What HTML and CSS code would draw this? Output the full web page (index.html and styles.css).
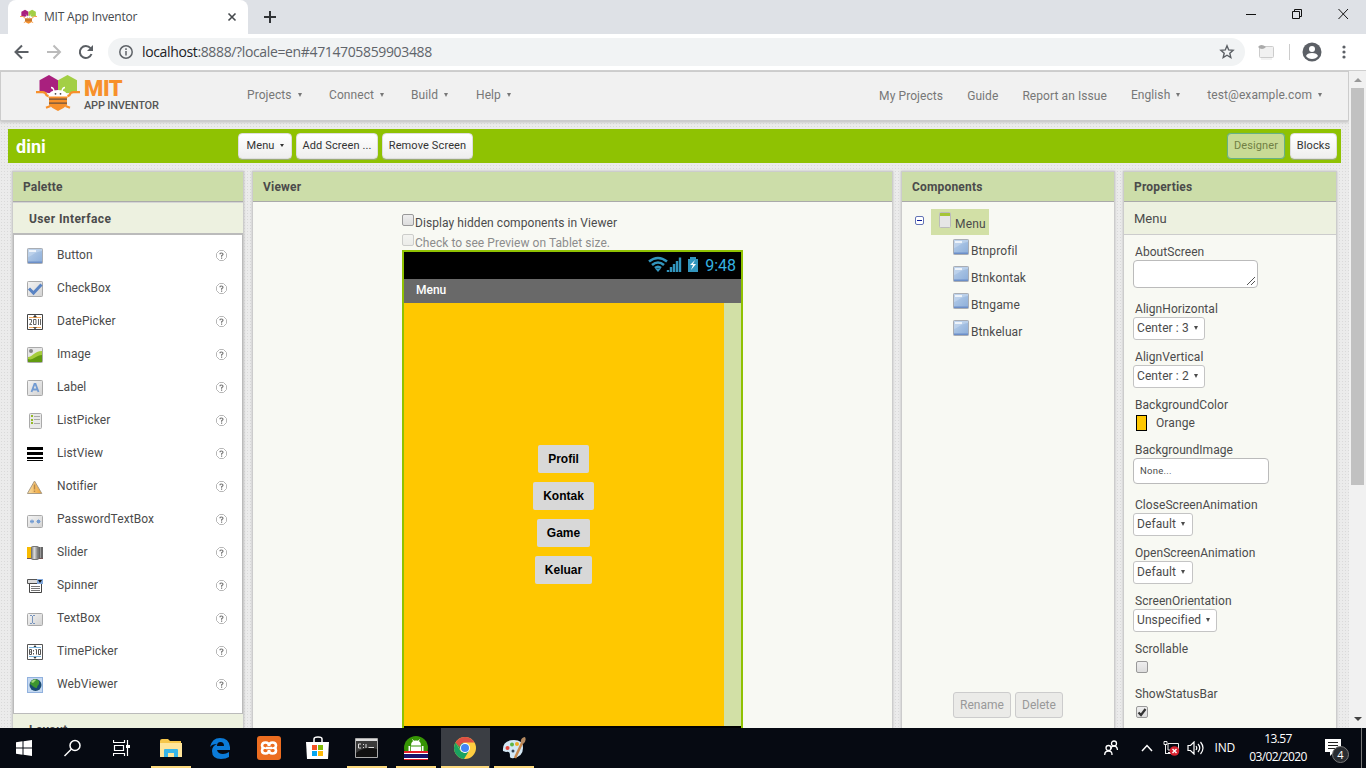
FILE: index.html
```html
<!DOCTYPE html>
<html lang="en">
<head>
<meta charset="utf-8">
<title>MIT App Inventor</title>
<link rel="stylesheet" href="styles.css">
</head>
<body>
<svg class="defs" width="0" height="0">
  <defs>
    <linearGradient id="blue" x1="0" y1="0" x2="1" y2="1"><stop offset="0" stop-color="#b9d0ea"/><stop offset="1" stop-color="#8badd9"/></linearGradient>
    <linearGradient id="grey" x1="0" y1="0" x2="1" y2="1"><stop offset="0" stop-color="#f4f4f4"/><stop offset="1" stop-color="#d2d2d2"/></linearGradient>
    <linearGradient id="amber" x1="0" y1="0" x2="1" y2="0"><stop offset="0" stop-color="#fbe0a4"/><stop offset="1" stop-color="#eda034"/></linearGradient>
    <linearGradient id="steel" x1="0" y1="0" x2="1" y2="0"><stop offset="0" stop-color="#777"/><stop offset=".4" stop-color="#ddd"/><stop offset="1" stop-color="#666"/></linearGradient>
    <symbol id="button" viewBox="0 0 16 16"><rect x=".5" y=".5" width="15" height="15" rx=".8" fill="url(#blue)" stroke="#a9adb3"/><path d="M1 14V9C5 8 7 4 15 3V1H1Z" fill="#c6d9ef" opacity=".6"/><path d="M2 2h7v2H2z" fill="#edf3fa"/><path d="M1 13.5h14V15H1z" fill="#6c8fc8"/></symbol>
    <symbol id="checkbox" viewBox="0 0 16 16"><rect x=".5" y=".5" width="15" height="15" rx=".8" fill="url(#grey)" stroke="#aaa"/><path d="M2 7.500l4.500 4.500L14.500 3.500" fill="none" stroke="#5a84c4" stroke-width="3"/></symbol>
    <symbol id="date" viewBox="0 0 16 16"><path d="M.5.5h15v15H.5z" fill="#fff" stroke="#444"/><path d="M2 3.500h12M2 13.500h12" stroke="#f3a95c"/><path d="M6.500 3L8 1l1.500 2zM6.500 13.500L8 15l1.500-1.500z" fill="#333" stroke="#333" stroke-width=".5"/><path d="M2 5.500h2.500V8L2.500 10.500H5M6.500 5.500H9v5H6.500zM11.500 5v6M13.500 5v6" fill="none" stroke="#666"/></symbol>
    <symbol id="image" viewBox="0 0 16 16"><rect x=".5" y=".5" width="15" height="15" rx=".8" fill="#e6e6e6" stroke="#aaa"/><path d="M1 10c5 0 6-6 14-6v11H1z" fill="#a5cc3c"/><path d="M1 15v-3c5 2 8-4 14-4v7z" fill="#629b10"/><circle cx="4" cy="4" r="2" fill="#888"/></symbol>
    <symbol id="label" viewBox="0 0 16 16"><rect x=".5" y=".5" width="15" height="15" rx=".8" fill="url(#grey)" stroke="#aaa"/><path d="M4.500 12L7.500 4h1l3 8M5.500 9.500h5" fill="none" stroke="#729bd2" stroke-width="1.800"/></symbol>
    <symbol id="listpicker" viewBox="0 0 16 16"><rect x="2.500" y=".5" width="12" height="15" rx="1" fill="#e8e8e8" stroke="#aaa"/><path d="M4 2h2v2H4zM4 6h2v2H4zM4 9h2v2H4z" fill="#94b928"/><path d="M7 3.500h6M7 6.500h6M7 10.500h6" stroke="#aaa"/></symbol>
    <symbol id="listview" viewBox="0 0 16 16"><path d="M0 1h16v3H0zM0 6h16v3H0zM0 11h16v2H0zM0 14h16v1H0z"/></symbol>
    <symbol id="notifier" viewBox="0 0 16 16"><path d="M7.500 2L14.800 14.500H.4Z" fill="url(#amber)" stroke="#a99c87"/><path d="M7.500 5.500v5M7.500 11.500v1.500" stroke="#b6884b" stroke-width="1.500"/></symbol>
    <symbol id="password" viewBox="0 0 16 16"><rect x=".5" y="3.500" width="15" height="12" rx="1" fill="url(#grey)" stroke="#aaa"/><path d="M5 7.500v4M3 9.500h4M3.500 8l3 3M6.500 8l-3 3M11.500 7.500v4M9.500 9.500h4M10 8l3 3M13 8l-3 3" stroke="#759dd2"/></symbol>
    <symbol id="slider" viewBox="0 0 16 16"><path d="M0 2h7v11H0z" fill="#f8bb00"/><path d="M11 2h5v11h-5z" fill="#666"/><path d="M13 2h1v11h-1z" fill="#999"/><path d="M0 13h16v1H0z" fill="#755"/><rect x="4.500" y="1.500" width="7" height="13" rx="1" fill="url(#steel)" stroke="#777"/></symbol>
    <symbol id="spinner" viewBox="0 0 16 16"><path d="M.5 1.500h15v4H.5z" fill="#ddd" stroke="#555"/><path d="M2.500 5.500h12v9h-12z" fill="#fff" stroke="#444"/><path d="M10 1h6v5h-6z" fill="#83a9dc"/><path d="M11 2h4l-2 3z" fill="#111"/><path d="M4 8.500h9M4 10.500h9M4 12.500h9" stroke="#777"/></symbol>
    <symbol id="textbox" viewBox="0 0 16 16"><rect x=".5" y="2.500" width="15" height="12" rx="1" fill="url(#grey)" stroke="#aaa"/><path d="M3 4.500h2M6 4.500h2M5.500 5v7M3 12.500h2M6 12.500h2" stroke="#7895bd" fill="none"/></symbol>
    <symbol id="time" viewBox="0 0 16 16"><path d="M.5.5h15v15H.5z" fill="#fff" stroke="#555"/><path d="M2 3.500h12M2 12.500h12" stroke="#7ab3dc"/><path d="M6.500 3L8 1l1.500 2zM6.500 13L8 15l1.500-2z" fill="#333"/><path d="M2.500 5.500h2v5h-2zM2.500 8h2M6.500 6v1.500M6.500 9v1.500M8.500 5.500h1v5M11.500 5.500h2v5h-2z" fill="none" stroke="#555"/></symbol>
    <symbol id="web" viewBox="0 0 16 16"><rect x=".5" y=".5" width="15" height="15" fill="#c5d9f1" stroke="#91b1de"/><circle cx="8.500" cy="8" r="6" fill="#194a71"/><path d="M3 7c1-5 6-6 9-3 1 4-2 4-2 7-3 0-4-2-7-4z" fill="#3d952f"/><path d="M4 5c1-2 4-3 5-2L6 6z" fill="#a2da79"/></symbol>
    <symbol id="help" viewBox="0 0 12 12"><path d="M3.500.5h4l3 3v4l-3 3h-4l-3-3v-4z" fill="#fff" stroke="#b8b8b8"/><path d="M4 4.200Q4 3 5.500 3T7 4.200Q7 5 5.600 5.800V6.800M5.600 7.600v1.200" fill="none" stroke="#777" stroke-width="1.200"/></symbol>
    <symbol id="bee" viewBox="0 0 44 37">
      <path d="M3.500 5.200L13 0l9 5.200V18H12l-8.500-2z" fill="#a9207e"/>
      <path d="M22 5.200L31.500 0 41 5.200V16l-8 2H22z" fill="#a3cf45"/>
      <path d="M0 17.200h6.500q3 0 4 3l3 1.500M44 17.200h-6.500q-3 0-4 3l-3 1.500M14.500 31l-4.500 1.800M29.500 31l4.500 1.800" fill="none" stroke="#f7902b" stroke-width="2.200"/>
      <path d="M12.500 22q0-7 9.500-7t9.500 7z" fill="#fff"/>
      <path d="M15 12.500q2.500 0 3 3.500M29 12.500q-2.500 0-3 3.500" fill="none" stroke="#fff" stroke-width="1.300"/>
      <path d="M13 21.500h18V30q-3 3.500-9 6-6-2.500-9-6z" fill="#f7902b"/>
      <path d="M13 24.200h18M13 28.200h18" stroke="#6b513f" stroke-width="1.300"/>
      <circle cx="19.500" cy="18.800" r=".9" fill="#444"/><circle cx="24.500" cy="18.800" r=".9" fill="#444"/>
    </symbol>
  </defs>
</svg>

<div class="tabs">
  <div class="tab"><svg width="17" height="16"><use href="#bee"/></svg><span>MIT App Inventor</span><svg class="tab-close" width="10" height="10"><path d="M1.500 1.500l7 7m0-7l-7 7" stroke="#45494d" stroke-width="1.600"/></svg></div>
  <svg class="plus" width="14" height="14"><path d="M7 1v12M1 7h12" stroke="#303336" stroke-width="2"/></svg>
  <svg class="winbtns" width="104" height="12" fill="none" stroke="#111"><path d="M0 6.500h10M46.500 3.500h7v7h-7zM48.500 3v-1.500h7v7H54M92.500 1l9.500 10m0-10l-9.500 10"/></svg>
</div>
<div class="toolbar">
  <svg class="nav" width="82" height="18" fill="none" stroke="#5b5f64" stroke-width="2"><path d="M14.500 9H2M8 2.500L1.500 9 8 15.500"/><path d="M33 9h12.500M39.500 2.500L46 9l-6.500 6.500" stroke="#bbb"/><path d="M76.500 5.200A6 6 0 1 0 77.500 11"/><path d="M79 2v6h-6z" fill="#5b5f64" stroke="none"/></svg>
  <div class="omnibox">
    <svg width="14" height="14" fill="none" stroke="#5f6368" stroke-width="1.500"><circle cx="7" cy="7" r="6.200"/><path d="M7 6v4.500M7 3.300v1.600"/></svg>
    <span class="url"><b>localhost</b>:8888/?locale=en#4714705859903488</span>
    <svg class="star" width="16" height="16" viewBox="0 0 16 16"><path d="M8 1.800l1.700 4.100 4.400.4-3.300 2.900 1 4.300L8 11.200l-3.800 2.300 1-4.300L1.900 6.300l4.400-.4z" fill="none" stroke="#5b5f64" stroke-width="1.400"/></svg>
  </div>
  <svg class="ext" width="17" height="16"><rect x="1.500" y="2.500" width="14" height="11" rx="1" fill="#f1f1f1" stroke="#ccc"/><path d="M0 3q3-4 8 0-4 4-8 0" fill="#aaa"/><path d="M3 15h11" stroke="#e5e5e5"/></svg>
  <i class="sep"></i>
  <svg class="avatar" width="20" height="20"><circle cx="10" cy="10" r="9.500" fill="#5c6066"/><circle cx="10" cy="7" r="3" fill="#fff"/><path d="M4 14q1-3 6-3t6 3q-2 3-6 3t-6-3" fill="#fff"/></svg>
  <svg class="dots" width="4" height="14" fill="#5c6066"><circle cx="2" cy="2" r="1.600"/><circle cx="2" cy="7" r="1.600"/><circle cx="2" cy="12" r="1.600"/></svg>
</div>

<div class="viewport">
  <div class="page">
    <header class="top">
      <svg class="logo" width="44" height="37"><use href="#bee"/></svg>
      <div class="brand"><strong>MIT</strong><span>APP INVENTOR</span></div>
      <nav class="menu"><span class="m1">Projects<i class="ar"></i></span><span class="m2">Connect<i class="ar"></i></span><span class="m3">Build<i class="ar"></i></span><span>Help<i class="ar"></i></span></nav>
      <nav class="links"><span class="low l1">My Projects</span><span class="low l2">Guide</span><span class="low l3">Report an Issue</span><span class="l4">English<i class="ar"></i></span><span class="l5">test@example.com<i class="ar"></i></span></nav>
    </header>
    <div class="green">
      <h1>dini</h1>
      <span class="btn b1">Menu<i class="ar"></i></span><span class="btn b2">Add Screen ...</span><span class="btn b3">Remove Screen</span>
      <span class="btn b4">Designer</span><span class="btn b5">Blocks</span>
    </div>
    <main class="cols">
      <section class="panel palette">
        <h2>Palette</h2>
        <h3>User Interface</h3>
        <ul>
          <li><svg class="ic"><use href="#button"/></svg><span>Button</span><svg class="q"><use href="#help"/></svg></li>
          <li><svg class="ic"><use href="#checkbox"/></svg><span>CheckBox</span><svg class="q"><use href="#help"/></svg></li>
          <li><svg class="ic"><use href="#date"/></svg><span>DatePicker</span><svg class="q"><use href="#help"/></svg></li>
          <li><svg class="ic"><use href="#image"/></svg><span>Image</span><svg class="q"><use href="#help"/></svg></li>
          <li><svg class="ic"><use href="#label"/></svg><span>Label</span><svg class="q"><use href="#help"/></svg></li>
          <li><svg class="ic"><use href="#listpicker"/></svg><span>ListPicker</span><svg class="q"><use href="#help"/></svg></li>
          <li><svg class="ic"><use href="#listview"/></svg><span>ListView</span><svg class="q"><use href="#help"/></svg></li>
          <li><svg class="ic"><use href="#notifier"/></svg><span>Notifier</span><svg class="q"><use href="#help"/></svg></li>
          <li><svg class="ic"><use href="#password"/></svg><span>PasswordTextBox</span><svg class="q"><use href="#help"/></svg></li>
          <li><svg class="ic"><use href="#slider"/></svg><span>Slider</span><svg class="q"><use href="#help"/></svg></li>
          <li><svg class="ic"><use href="#spinner"/></svg><span>Spinner</span><svg class="q"><use href="#help"/></svg></li>
          <li><svg class="ic"><use href="#textbox"/></svg><span>TextBox</span><svg class="q"><use href="#help"/></svg></li>
          <li><svg class="ic"><use href="#time"/></svg><span>TimePicker</span><svg class="q"><use href="#help"/></svg></li>
          <li><svg class="ic"><use href="#web"/></svg><span>WebViewer</span><svg class="q"><use href="#help"/></svg></li>
        </ul>
        <h3 class="layout">Layout</h3>
      </section>
      <section class="panel viewer">
        <h2>Viewer</h2>
        <div class="checks"><p><i class="cb"></i>Display hidden components in Viewer</p><p class="off"><i class="cb"></i>Check to see Preview on Tablet size.</p></div>
        <div class="phone">
          <div class="status">
            <svg width="52" height="18" viewBox="0 0 52 18" fill="none" stroke="#3295bd" stroke-width="2.600"><path d="M1 5.500q9-7 18 0M4 9q6-5 12 0M7 12q3-2.500 6 0"/><path d="M10 16l-3-3.500h6z" fill="#3295bd" stroke="none"/><path d="M20 16v-2M23 16v-5M26 16V8M29 16V5M32 16V1.500" stroke-width="2.400"/><path d="M40 3h2V1h6v2h2v13H40z" fill="#3295bd" stroke="none"/><path d="M47 4l-5 5h3l-2 5 5-6h-3z" fill="#fff" stroke="none"/></svg>
            <span>9:48</span>
          </div>
          <div class="title">Menu</div>
          <div class="body"><div class="screen"><span class="pb p1">Profil</span><span class="pb p2">Kontak</span><span class="pb p3">Game</span><span class="pb p4">Keluar</span></div></div>
          <div class="bottom"></div>
        </div>
      </section>
      <section class="panel comps">
        <h2>Components</h2>
        <div class="root"><svg width="10" height="10"><rect x=".5" y=".5" width="8" height="8" rx="1.500" fill="#fff" stroke="#6474b5"/><path d="M2 4.500h5" stroke="#111f9a"/></svg><span class="sel"><svg width="14" height="17"><rect x="1.500" y=".5" width="11" height="15" rx="1" fill="#e6e6e6" stroke="#bbb"/><path d="M2 1h10v3H2z" fill="#a5c438"/></svg>Menu</span></div>
        <div class="child"><svg class="ic"><use href="#button"/></svg><span>Btnprofil</span></div>
        <div class="child"><svg class="ic"><use href="#button"/></svg><span>Btnkontak</span></div>
        <div class="child"><svg class="ic"><use href="#button"/></svg><span>Btngame</span></div>
        <div class="child"><svg class="ic"><use href="#button"/></svg><span>Btnkeluar</span></div>
        <div class="actions"><span class="rn">Rename</span><span class="dl">Delete</span></div>
      </section>
      <section class="panel props">
        <h2>Properties</h2>
        <h4>Menu</h4>
        <div class="pr r1"><label>AboutScreen</label><div class="ta"><svg width="10" height="10"><path d="M1 9l8-8M5 9l4-4" stroke="#555"/></svg></div></div>
        <div class="pr"><label>AlignHorizontal</label><span class="dd w72">Center : 3<i class="ar"></i></span></div>
        <div class="pr"><label>AlignVertical</label><span class="dd w72">Center : 2<i class="ar"></i></span></div>
        <div class="pr r4"><label>BackgroundColor</label><div class="color"><i></i>Orange</div></div>
        <div class="pr r5"><label>BackgroundImage</label><div class="none">None...</div></div>
        <div class="pr"><label>CloseScreenAnimation</label><span class="dd w60">Default<i class="ar"></i></span></div>
        <div class="pr"><label>OpenScreenAnimation</label><span class="dd w60">Default<i class="ar"></i></span></div>
        <div class="pr"><label>ScreenOrientation</label><span class="dd w84">Unspecified<i class="ar"></i></span></div>
        <div class="pr r9"><label>Scrollable</label><i class="cb"></i></div>
        <div class="pr r9"><label>ShowStatusBar</label><i class="cb"><svg width="10" height="10"><path d="M1.500 5.500L4 8l4.500-6" fill="none" stroke="#333" stroke-width="2.200"/></svg></i></div>
      </section>
    </main>
  </div>
  <div class="scroll"><i class="up"></i><div class="thumb"></div><i class="down"></i></div>
</div>

<footer class="task">
  <div class="t"><svg width="16" height="16" fill="#fff"><path d="M0 2.300l6.500-1v6.200H0zM7.500 1.200L16 0v7.500H7.500zM0 8.500h6.500v6.200L0 13.800zM7.500 8.500H16V16l-8.500-1.200z"/></svg></div>
  <div class="t"><svg width="18" height="18" fill="none" stroke="#fff" stroke-width="1.500"><circle cx="11" cy="6.500" r="5"/><path d="M7.500 10l-7 7"/></svg></div>
  <div class="t"><svg width="18" height="16" fill="none" stroke="#fff"><path d="M.5 0v2.500h11V0M.5 16v-2.500h11V16M1.500 5.500h9v5h-9zM14.500 0v16" stroke-width="1.200"/><path d="M13 5h4v3h-4z" fill="#fff" stroke="none"/></svg></div>
  <div class="t u"><svg width="22" height="18"><path d="M0 2q0-2 2-2h6l2 2h11v16H0z" fill="#f6c64a"/><path d="M0 4h22v14H0z" fill="#ffe59a"/><path d="M4 18v-7q0-1 1-1h12q1 0 1 1v7h-4v-4H8v4z" fill="#37b5e8"/></svg></div>
  <div class="t"><svg width="22" height="22" viewBox="0 0 22 22"><path d="M1 10Q3 1 11 1q9 0 10 9v3H8q1 4 6 4 3 0 6-2v5q-3 2-8 2Q3 22 3 14q0-5 5-7-5 0-7 3zM8 9h7q0-4-3.500-4T8 9z" fill="#0b7bd8" fill-rule="evenodd"/></svg></div>
  <div class="t"><svg width="24" height="24"><rect width="24" height="24" rx="3" fill="#ec6d20"/><path d="M12 10Q12 6.500 8.500 6.500T5 9.500q0 2 1.500 2.500-1.500.5-1.500 2.500 0 3 3.500 3T12 14q0 3.500 3.500 3.500t3.500-3q0-2-1.500-2.500 1.500-.5 1.500-2.500 0-3-3.500-3T12 10M9 12h6" fill="none" stroke="#fff" stroke-width="2.600"/></svg></div>
  <div class="t"><svg width="24" height="24"><path d="M8 7V3q0-2 4-2t4 2v4" fill="none" stroke="#fff" stroke-width="1.500"/><path d="M0 6h23l-1 17H1z" fill="#fff"/><path d="M6 9h5v5H6z" fill="#f35325"/><path d="M12 9h5v5h-5z" fill="#81bc06"/><path d="M6 15h5v5H6z" fill="#05a6f0"/><path d="M12 15h5v5h-5z" fill="#ffba08"/></svg></div>
  <div class="t u"><svg width="24" height="20"><path d="M.5.500h22v19H.5z" fill="#111" stroke="#aaa"/><path d="M1 1h21v2H1z" fill="#ddd"/><path d="M1 3h21v8q-12-3-21 4z" fill="#3b3b3b"/><path d="M6 6H3.500v4H6M8.500 6v1M8.500 9v1M11 6v4M13.500 9.500H19" stroke="#ddd" fill="none"/></svg></div>
  <div class="t u"><svg width="24" height="24"><circle cx="12" cy="12" r="12" fill="#369405"/><path d="M7 9.500q0-5 5-5t5 5zM7 10.500h10V15H7zM4.500 10h1.700v5H4.500zM17.800 10h1.700v5h-1.700z" fill="#fff"/><path d="M8.500 3.500l1.500 2M15.500 3.500l-1.500 2" stroke="#fff"/><path d="M0 15h24v9H0z" fill="#fff"/><path d="M0 15h24v2H0zM0 23h24v1H0z" fill="#e5202b"/><path d="M0 18h24v4H0z" fill="#17126b"/></svg></div>
  <div class="t u on"><svg width="22" height="22" viewBox="0 0 22 22"><circle cx="11" cy="11" r="11" fill="#ffcd40"/><path d="M1.500 5.500A11 11 0 0 0 10 22l5.500-9L11 16l-4.500-2z" fill="#1aa260"/><path d="M1.500 5.500L7 14l4-8z" fill="#1aa260"/><path d="M1.500 5.500A11 11 0 0 1 20.500 5.500H11A5.500 5.500 0 0 0 5.700 10z" fill="#dd5044"/><circle cx="11" cy="11" r="5" fill="#fff"/><circle cx="11" cy="11" r="4" fill="#4285f4"/></svg></div>
  <div class="t u"><svg width="24" height="24"><path d="M1 15Q0 4 12 4q9 0 9 8t-9 10q-5 1-4-3 0-4-4-3z" fill="#d4e8f5"/><circle cx="5.500" cy="12" r="2" fill="#e5473d"/><circle cx="10" cy="8.500" r="2" fill="#5db543"/><circle cx="15" cy="8" r="2" fill="#eeac25"/><circle cx="11" cy="15" r="1.500" fill="#345"/><path d="M20 7l-7 15" stroke="#c7884d" stroke-width="2.500"/><path d="M19 7q-1-5 4-6 2 4-2 7z" fill="#b58a61"/></svg></div>
  <div class="tray">
    <svg width="14" height="16" fill="none" stroke="#fff" stroke-width="1.300"><circle cx="10" cy="3.500" r="2.500"/><path d="M7 9q0-3 3-3t3.500 4"/><circle cx="4.500" cy="8" r="2.500"/><path d="M.7 15q0-4 3.800-4T8 15"/></svg>
    <svg class="chev" width="12" height="8" fill="none" stroke="#fff" stroke-width="1.500"><path d="M1 7l5-5.500L11 7"/></svg>
    <svg class="net" width="17" height="16"><path d="M1 1.500h3v3H1zM2.500 5v9M2.500 13.500h6M5 3.500h10.500v6M5 3.500v6.500h4M5 12.500h4" fill="none" stroke="#eee"/><circle cx="11.500" cy="11" r="4.800" fill="#d8222f"/><path d="M9.500 9l4 4m0-4l-4 4" stroke="#fff" stroke-width="1.400"/></svg>
    <svg class="vol" width="18" height="14" fill="none" stroke="#fff"><path d="M1 4.500h2.500L7 1v12L3.500 9.500H1zM9 5q1.500 2 0 4M11 3q3.500 4 0 8M13.500 1q5 6 0 12" stroke-width="1.200"/></svg>
    <span class="ind">IND</span>
    <div class="clock"><span>13.57</span><span>03/02/2020</span></div>
    <div class="note"><svg width="17" height="17"><path d="M0 0h16v13H9l-4 4v-4H0z" fill="#fff"/><path d="M3 3.500h10M3 6.500h10M3 9.500h7" stroke="#222"/></svg><em>4</em></div>
    <i class="edge"></i>
  </div>
</footer>
</body>
</html>
```

FILE: styles.css
```css
* { box-sizing: border-box; margin: 0; padding: 0; }
body { width: 1366px; height: 768px; overflow: hidden; display: flex; flex-direction: column; font: 12px/14px Roboto, sans-serif; color: #4b4b4b; }
svg { display: block; flex: none; }
.defs { position: absolute; }
i, em { font-style: normal; flex: none; }
.ar { display: inline-block; width: 0; height: 0; border: 2.5px solid transparent; border-top: 4px solid currentColor; border-bottom: 0; margin-left: 6px; vertical-align: 2px; }

/* Browser frame */
.tabs { height: 34px; flex: none; background: #dee1e6; display: flex; padding-left: 8px; }
.tab { width: 240px; background: #fff; border-radius: 8px 8px 0 0; display: flex; align-items: center; padding: 0 11px 0 12px; font: 12px/16px "Open Sans", sans-serif; color: #45494d; }
.tab span { margin-left: 7px; letter-spacing: -.2px; }
.tab-close { margin-left: auto; }
.plus { margin: 10px 0 0 15px; }
.winbtns { margin: 8px 16px 0 auto; }
.toolbar { height: 37px; flex: none; background: #fff; border-bottom: 1px solid #cfcfcf; display: flex; align-items: center; }
.nav { margin-left: 14px; }
.omnibox { margin-left: 12px; width: 1137px; height: 28px; border-radius: 14px; background: #f1f3f4; display: flex; align-items: center; padding: 0 10px 0 11px; }
.url { margin-left: 9px; font: 14px/18px "Open Sans", sans-serif; color: #60646a; letter-spacing: -.36px; }
.url b { font-weight: 400; color: #202124; }
.star { margin-left: auto; }
.ext { margin-left: 13px; }
.sep { width: 1px; height: 16px; background: #ccc; margin-left: 14px; }
.avatar { margin-left: 12px; }
.dots { margin-left: 20px; }

/* Page */
.viewport { height: 657px; flex: none; display: flex; }
.page { width: 1349px; height: 657px; overflow: hidden; background-color: #ebebeb; background-image: radial-gradient(#d9d9d9 25%, transparent 45%); background-size: 3px 3px; }
.top { height: 50px; background: #f1f1f1; border: 1px solid #ccc; box-shadow: 0 1px 3px #bbb; display: flex; color: #777; letter-spacing: .08px; }
.logo { margin: 3px 0 0 35px; }
.brand { width: 163px; margin: 5px 0 0 4px; display: flex; flex-direction: column; }
.brand strong { font: 900 22px/23px Roboto, sans-serif; height: 22px; color: #f7902b; letter-spacing: -.4px; }
.brand span { font: 500 11px/13px Roboto, sans-serif; color: #555; letter-spacing: -.2px; white-space: nowrap; }
.menu, .links { display: flex; padding-top: 16px; white-space: nowrap; }
.menu span { width: 82px; }
.menu .m3 { width: 65px; }
.links { margin-left: auto; padding-right: 26px; }
.low { padding-top: 1px; }
.l1 { margin-right: 24px; } .l2 { margin-right: 24px; } .l3 { margin-right: 24px; } .l4 { margin-right: 27px; }
.green { margin: 8px 8px 0; height: 34px; background: #8fc202; display: flex; padding: 4px 4px 0 8px; }
.green h1 { width: 222px; font: 700 18px/28px Roboto, sans-serif; color: #fff; }
.btn { height: 26px; border: 1px solid #ddd; border-radius: 4px; background: linear-gradient(#fff, #eee); font: 11px/23px Roboto, sans-serif; letter-spacing: .12px; text-align: center; color: #333; margin-right: 4px; white-space: nowrap; box-shadow: 0 1px 0 #9aaa75; }
.btn .ar { margin-left: 5px; border-top-width: 3px; }
.b1 { width: 54px; } .b2 { width: 82px; } .b3 { width: 91px; }
.b4 { width: 58px; margin-left: auto; margin-right: 5px; background: #c8da95; color: #718044; border: 1px solid #68b184; box-shadow: 0 0 1px #68b184; }
.b5 { width: 47px; margin-right: 0; }
.cols { margin: 8px 12px 0; display: flex; gap: 8px; height: 557px; }
.panel { border: 1px solid #ccc; border-bottom: 0; background: #f8f9f3; overflow: hidden; box-shadow: 0 0 2px #bbb; height: 557px; }
.panel h2 { height: 30px; border-bottom: 1px solid #aaa; background: #ccdda9; font: 700 12px/30px Roboto, sans-serif; padding-left: 10px; letter-spacing: .18px; }
.palette { width: 232px; } .viewer { width: 641px; } .comps { width: 214px; } .props { width: 214px; }
.palette h3 { height: 33px; background: #edf1e0; border-top: 1px solid #d5d5d5; border-bottom: 2px solid #bbb; font: 700 12px/32px Roboto, sans-serif; padding-left: 16px; letter-spacing: .4px; }
.palette h3.layout { border-top: 1px solid #bbb; border-bottom: 0; }
.palette ul { background: #fff; list-style: none; height: 478px; padding: 4px 14px 0 13px; border: solid #bbb; border-width: 0 1px; }
.palette li { height: 33px; display: flex; align-items: flex-start; }
.palette li span { margin: 9px 0 0 14px; flex: 1; letter-spacing: .07px; }
.palette li .ic { margin-top: 9px; }
.ic { width: 16px; height: 16px; }
.q { width: 12px; height: 12px; margin-top: 11px; }
.checks { padding: 10px 0 0 149px; height: 48px; letter-spacing: .07px; }
.checks p { display: flex; height: 20px; line-height: 23px; }
.checks .off { color: #8c8c8c; letter-spacing: .05px; }
.checks .cb { margin-top: 2px; margin-right: 1px; }
.checks .off .cb { opacity: .45; }
.cb { display: block; width: 12px; height: 12px; border: 1px solid #999; border-radius: 2px; background: linear-gradient(#eee, #ddd); }
.phone { margin-left: 149px; width: 341px; border: 2px solid #8fc202; border-bottom: 0; }
.status { height: 27px; background: #000; color: #35b2e1; display: flex; justify-content: flex-end; padding: 4px 5px 0 0; font: 16px/19px Roboto, sans-serif; }
.status span { margin-left: 5px; }
.title { height: 24px; background: #696969; color: #fff; font: 500 12px/22px Roboto, sans-serif; padding-left: 12px; }
.body { height: 423px; background: #d2e0a6; }
.screen { width: 320px; height: 423px; background: #ffc800; display: flex; flex-direction: column; align-items: center; gap: 9px; padding: 142px 2px 0 0; }
.bottom { height: 2px; background: #000; }
.pb { height: 28px; background: #d8d8d8; border-radius: 2px; text-align: center; padding-left: 1px; font: 700 12px/28px "Liberation Sans", sans-serif; color: #000; }
.p1 { width: 51px; } .p2 { width: 61px; } .p3 { width: 53px; } .p4 { width: 57px; }
.root { display: flex; margin: 7px 0 3px 13px; height: 26px; }
.root > svg { margin: 7px 6px 0 0; }
.sel { width: 58px; height: 26px; background: #d2e0a6; display: flex; padding: 3px 0 0 7px; line-height: 24px; letter-spacing: .2px; }
.sel svg { margin-right: 3px; }
.child { display: flex; padding-left: 51px; height: 27px; }
.child .ic { margin-top: 1px; }
.child span { margin: 6px 0 0 2px; letter-spacing: .1px; }
.actions { display: flex; padding-left: 51px; margin-top: 346px; gap: 4px; }
.actions span { height: 26px; border: 1px solid #ccc; border-radius: 3px; background: #ebebe8; color: #999; text-align: center; line-height: 24px; }
.rn { width: 58px; } .dl { width: 48px; }
.props h4 { height: 33px; background: #edf1e0; border-bottom: 1px solid #ccc; font: 13px/33px Roboto, sans-serif; padding-left: 10px; }
.pr { height: 48px; padding-left: 9px; }
.pr label { display: block; height: 15px; line-height: 14px; padding-left: 2px; letter-spacing: .05px; }
.r1 { height: 67px; padding-top: 10px; }
.ta { width: 125px; height: 28px; border: 1px solid #bbb; border-radius: 4px; background: #fff; display: flex; align-items: flex-end; justify-content: flex-end; padding: 1px; }
.dd { display: block; height: 23px; border: 1px solid #c4c4c4; border-radius: 3px; background: #fff; padding-left: 3px; line-height: 20px; letter-spacing: .1px; white-space: nowrap; }
.w72 { width: 72px; } .w60 { width: 60px; } .w84 { width: 84px; }
.dd .ar { margin-left: 5px; }
.r4 { height: 45px; } .r5 { height: 55px; } .r9 { height: 45px; }
.color { display: flex; line-height: 18px; padding: 1px 0 0 3px; gap: 9px; letter-spacing: .1px; }
.color i { width: 11px; height: 16px; margin-top: 1px; border: 1px solid #000; background: #ffc800; }
.none { width: 136px; height: 26px; border: 1px solid #bbb; border-radius: 4px; background: #fff; font: 9.500px/24px Roboto, sans-serif; letter-spacing: .25px; padding-left: 6px; }
.r9 .cb { margin: 4px 0 0 3px; }
.scroll { width: 17px; background: #f1f1f1; display: flex; flex-direction: column; align-items: center; }
.up { border: 4px solid transparent; border-bottom: 4px solid #999; border-top: 0; margin: 7px 0 6px; }
.thumb { width: 13px; height: 397px; background: #c1c1c1; }
.down { border: 4px solid transparent; border-top: 4px solid #444; border-bottom: 0; margin-top: auto; margin-bottom: 7px; }

/* Taskbar */
.task { height: 40px; flex: none; background: #060a12; display: flex; }
.t { width: 49px; height: 40px; display: flex; align-items: center; justify-content: center; padding-right: 1px; }
.u { background: linear-gradient(#fcd97d, #fcd97d) 4px bottom / 40px 2px no-repeat; }
.on { background: linear-gradient(#fcd97d, #fcd97d) 0 bottom / 48px 2px no-repeat #3b3e44; }
.tray { margin-left: auto; display: flex; align-items: center; color: #fff; font: 12px/18px "Open Sans", sans-serif; }
.chev { margin-left: 23px; }
.net { margin-left: 10px; }
.vol { margin-left: 7px; }
.ind { margin-left: 10px; letter-spacing: -.2px; }
.clock { width: 60px; margin-left: 13px; display: flex; flex-direction: column; align-items: center; letter-spacing: -.6px; }
.note { position: relative; width: 24px; height: 22px; margin: 3px 0 0 17px; }
.note em { position: absolute; left: 7px; top: 7px; width: 17px; height: 17px; border: 1px solid #777; border-radius: 50%; background: #292c31; font-size: 11px; line-height: 15px; text-align: center; }
.edge { width: 1px; height: 40px; background: #777; margin: 0 4px 0 12px; }
```
